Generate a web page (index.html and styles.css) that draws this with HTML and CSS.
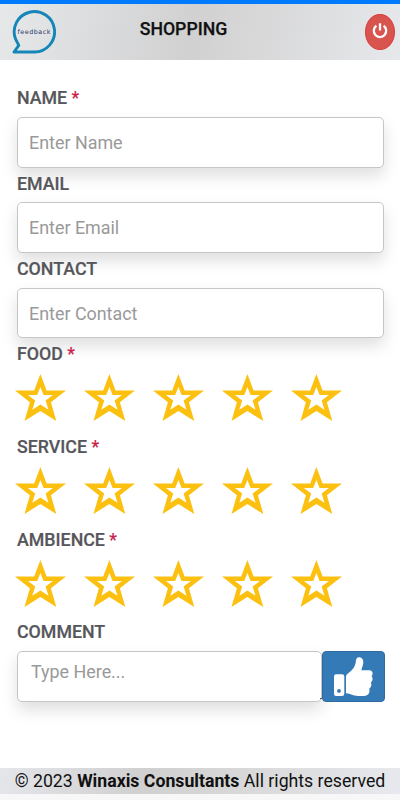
FILE: index.html
```
<!DOCTYPE html>
<html lang="en">
<head>
<meta charset="utf-8">
<title>Shopping feedback</title>
<link rel="stylesheet" href="styles.css">
</head>
<body>
<svg width="0" height="0" class="defs">
  <symbol id="star" viewBox="0 0 51 47"><path fill-rule="evenodd" d="M25.4 0 31.6 16.6H51L35.9 28.2 41.3 47 25.4 37 9.5 47 14.9 28.2 0 16.6H19.2ZM25.4 13 22.2 21H12.9L20.2 26.5 17.3 35.7 25.4 30.6 33.5 35.7 30.6 26.5 37.9 21H28.6Z"/></symbol>
</svg>
<header class="header">
  <svg class="logo" viewBox="0 0 44 45"><path d="M2 42H22.5A20.2 20.2 0 1 0 3.6 29.2L6.8 35.4Z"/><text x="5.5" y="24" textLength="33">feedback</text></svg>
  <h1>SHOPPING</h1>
  <button class="power" aria-label="Log out"><svg viewBox="0 0 16 16"><path d="M4.4 2.8a6.2 6.2 0 1 0 7.2 0M8 .2v7.3"/></svg></button>
</header>
<main class="form">
  <div class="field"><label>NAME <b>*</b></label><input placeholder="Enter Name"></div>
  <div class="field"><label>EMAIL</label><input placeholder="Enter Email"></div>
  <div class="field"><label>CONTACT</label><input placeholder="Enter Contact"></div>
  <div class="field"><label>FOOD <b>*</b></label><div class="stars"><svg><use href="#star"/></svg><svg><use href="#star"/></svg><svg><use href="#star"/></svg><svg><use href="#star"/></svg><svg><use href="#star"/></svg></div></div>
  <div class="field"><label>SERVICE <b>*</b></label><div class="stars"><svg><use href="#star"/></svg><svg><use href="#star"/></svg><svg><use href="#star"/></svg><svg><use href="#star"/></svg><svg><use href="#star"/></svg></div></div>
  <div class="field"><label>AMBIENCE <b>*</b></label><div class="stars"><svg><use href="#star"/></svg><svg><use href="#star"/></svg><svg><use href="#star"/></svg><svg><use href="#star"/></svg><svg><use href="#star"/></svg></div></div>
  <div class="field"><label>COMMENT</label>
    <div class="comment"><textarea placeholder="Type Here..."></textarea><i class="grip"></i>
      <button class="send" aria-label="Send"><svg viewBox="0 0 40 40"><path fill-rule="evenodd" d="M3 17.3H9Q11.3 17.3 11.3 19.6V36.8Q11.3 39 9 39H3Q1 39 1 36.8V19.6Q1 17.3 3 17.3ZM6 32A1.9 1.9 0 1 0 6 35.8 1.9 1.9 0 1 0 6 32Z"/><path d="M13 19.5Q13 17.5 15 16.4C19 13.5 22.5 9.5 22.8 4.5Q23.2.3 26 .3C30 .3 31 4.5 29.8 8.2L28.3 13.3H36.3C39.8 13.3 40.5 17 38.6 19.3 40.2 21.3 39.7 24.3 37.8 25.6 39 28 38 30.5 36.3 31.5 37.3 36.8 34.5 39 30 39H25C20 39 18 36.5 13 36.3Z"/></svg></button>
    </div>
  </div>
</main>
<footer class="footer"><p>© 2023 <strong>Winaxis Consultants</strong> All rights reserved</p></footer>
</body>
</html>
```
FILE: styles.css
```
* { box-sizing: border-box; }
body { margin: 0; height: 800px; display: flex; flex-direction: column; overflow: hidden; background: #fff; font-family: Roboto, sans-serif; color: #111; }
.defs { display: none; }
.header { height: 60px; flex: none; border-top: 4px solid #007bff; display: grid; grid-template-columns: 60px 1fr 60px; background: linear-gradient(100deg, #e7e8ea 0%, #dcdddf 22%, #d1d1d1 48%, #d8d8d9 65%, #e6e8eb 100%); }
.logo { width: 44px; height: 45px; margin: 6px 0 0 12px; }
.logo path { fill: none; stroke: #1486b8; stroke-width: 2.9; stroke-linejoin: round; }
.logo text { font: 6.4px "DejaVu Sans", sans-serif; fill: #2b3767; }
h1 { margin: 15px 0 0; padding-right: 33px; text-align: center; font-size: 17.7px; line-height: 20px; font-weight: 500; -webkit-text-stroke: .25px; }
.power { justify-self: end; width: 30px; height: 36px; margin: 10px 5px 0 0; padding: 0 0 3px; border: 1px solid #d43f3a; border-radius: 50%; background: #d9534f; display: grid; place-items: center; }
.power svg { width: 16px; height: 16px; fill: none; stroke: #fff; stroke-width: 2.3; stroke-linecap: butt; overflow: visible; }
.form { flex: 1; padding: 22.4px 15px 0 17px; }
label { display: block; height: 34.8px; line-height: 32.8px; font-size: 17.8px; font-weight: 500; color: #55565a; -webkit-text-stroke: .2px; }
label b { color: #c82348; font-weight: 400; }
input, textarea { display: block; width: 367px; height: 50.5px; border: 1px solid #c6c6c6; border-radius: 5px; background: #fff; padding: 0 11px; font: 17.9px Roboto, sans-serif; box-shadow: 0 8px 16px rgba(0,0,0,.13); outline: 0; }
::placeholder { color: #999; opacity: 1; }
.stars { height: 57.9px; display: flex; gap: 18px; padding-top: 1.2px; margin-left: -2px; }
.stars svg { width: 51px; height: 47px; flex: none; fill: #fcc010; }
.comment { display: flex; }
textarea { width: 305px; flex: none; padding: 9px 13px; resize: none; overflow: hidden; }
.grip { width: 2px; height: 1px; flex: none; margin: 47px 0 0 -2px; background: #555; z-index: 1; }
.send { width: 63px; height: 50.5px; flex: none; border: 1px solid #2e6da4; border-radius: 4px; background: #337ab7; padding: 5px 10px 0; display: flex; }
.send svg { width: 40px; height: 40px; flex: none; fill: #fff; }
.footer { height: 32px; flex: none; border-bottom: 6px solid #f7f7f8; background: linear-gradient(100deg, #e5e6ea, #d0d0d1 35%, #d8d8d9 60%, #e8e9ee); }
.footer p { margin: 0; text-align: center; white-space: nowrap; font-size: 17.7px; line-height: 26px; }
.footer strong { font-weight: 700; }
```
